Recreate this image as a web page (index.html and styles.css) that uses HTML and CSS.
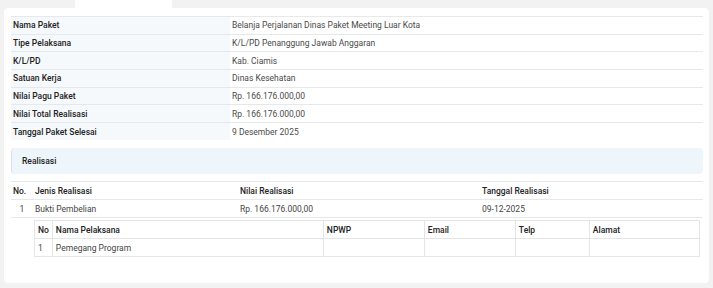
FILE: index.html
```html
<!DOCTYPE html>
<html lang="id">
<head>
<meta charset="utf-8">
<title>Detail Paket</title>
<link rel="stylesheet" href="styles.css">
</head>
<body>
<div class="tabs"><div class="tab"></div></div>
<div class="card">
  <table class="info">
    <tr><th>Nama Paket</th><td>Belanja Perjalanan Dinas Paket Meeting Luar Kota</td></tr>
    <tr><th>Tipe Pelaksana</th><td>K/L/PD Penanggung Jawab Anggaran</td></tr>
    <tr><th>K/L/PD</th><td>Kab. Ciamis</td></tr>
    <tr><th>Satuan Kerja</th><td>Dinas Kesehatan</td></tr>
    <tr><th>Nilai Pagu Paket</th><td>Rp. 166.176.000,00</td></tr>
    <tr><th>Nilai Total Realisasi</th><td>Rp. 166.176.000,00</td></tr>
    <tr><th>Tanggal Paket Selesai</th><td>9 Desember 2025</td></tr>
  </table>
  <div class="section">Realisasi</div>
  <table class="real">
    <colgroup><col class="c-no"><col class="c-jenis"><col class="c-nilai"><col></colgroup>
    <tr class="head"><th>No.</th><th>Jenis Realisasi</th><th>Nilai Realisasi</th><th>Tanggal Realisasi</th></tr>
    <tr><td class="num">1</td><td>Bukti Pembelian</td><td>Rp. 166.176.000,00</td><td>09-12-2025</td></tr>
    <tr><td class="nest-cell"></td><td colspan="3" class="nest-cell">
      <table class="pel">
        <colgroup><col class="p-no"><col class="p-nama"><col class="p-npwp"><col class="p-email"><col class="p-telp"><col></colgroup>
        <tr><th>No</th><th>Nama Pelaksana</th><th>NPWP</th><th>Email</th><th>Telp</th><th>Alamat</th></tr>
        <tr><td>1</td><td>Pemegang Program</td><td></td><td></td><td></td><td></td></tr>
      </table>
    </td></tr>
  </table>
</div>
</body>
</html>
```
FILE: styles.css
```css
* { box-sizing: border-box; }
body {
  margin: 0;
  background: #f2f2f2;
  font-family: Roboto, "Liberation Sans", sans-serif;
  font-size: 8.5px;
  color: #444;
}
.tabs { height: 8px; }
.tab { margin-left: 75px; width: 97px; height: 8px; background: #fff; }
.card {
  margin: 0 4px;
  width: 705px;
  height: 275px;
  background: #fff;
  border-radius: 4px;
  padding: 8px 6px 0 7px;
  box-shadow: 0 0 1px rgba(0,0,0,0.06);
}
table { border-collapse: collapse; width: 100%; }
th { text-align: left; font-weight: 500; color: #222; }
.info th, .info td {
  border-top: 1px solid #e6e8ea;
  padding: 0 2px;
  height: 17.7px;
  line-height: 10px;
}
.info tr:last-child th, .info tr:last-child td { height: 17.6px; }
.info th { width: 219px; background: #f6f9fc; }
.info td { color: #4a4a4a; }
.section {
  margin-top: 8px;
  height: 26px;
  background: #eef5fb;
  border-radius: 4px;
  border-left: 1px solid #d9e2ea;
  padding-left: 10px;
  padding-top: 1px;
  line-height: 25px;
  font-weight: 500;
  color: #222;
}
.real { margin-top: 7px; }
.real th, .real td {
  border-top: 1px solid #e6e8ea;
  padding: 0 2px;
  height: 18px;
  line-height: 10px;
}
.c-no { width: 22px; }
.c-jenis { width: 205px; }
.c-nilai { width: 242px; }
.real td.num { text-align: center; }
.real td.nest-cell { padding: 2px 3px 0 1px; height: auto; }
.real .pel th, .real .pel td {
  border: 1px solid #e3e5e7;
  padding: 0 3px 0 3px;
  height: 18px;
  line-height: 10px;
}
.p-no { width: 17px; }
.p-nama { width: 271px; }
.p-npwp { width: 101px; }
.p-email { width: 91px; }
.p-telp { width: 74px; }
```
